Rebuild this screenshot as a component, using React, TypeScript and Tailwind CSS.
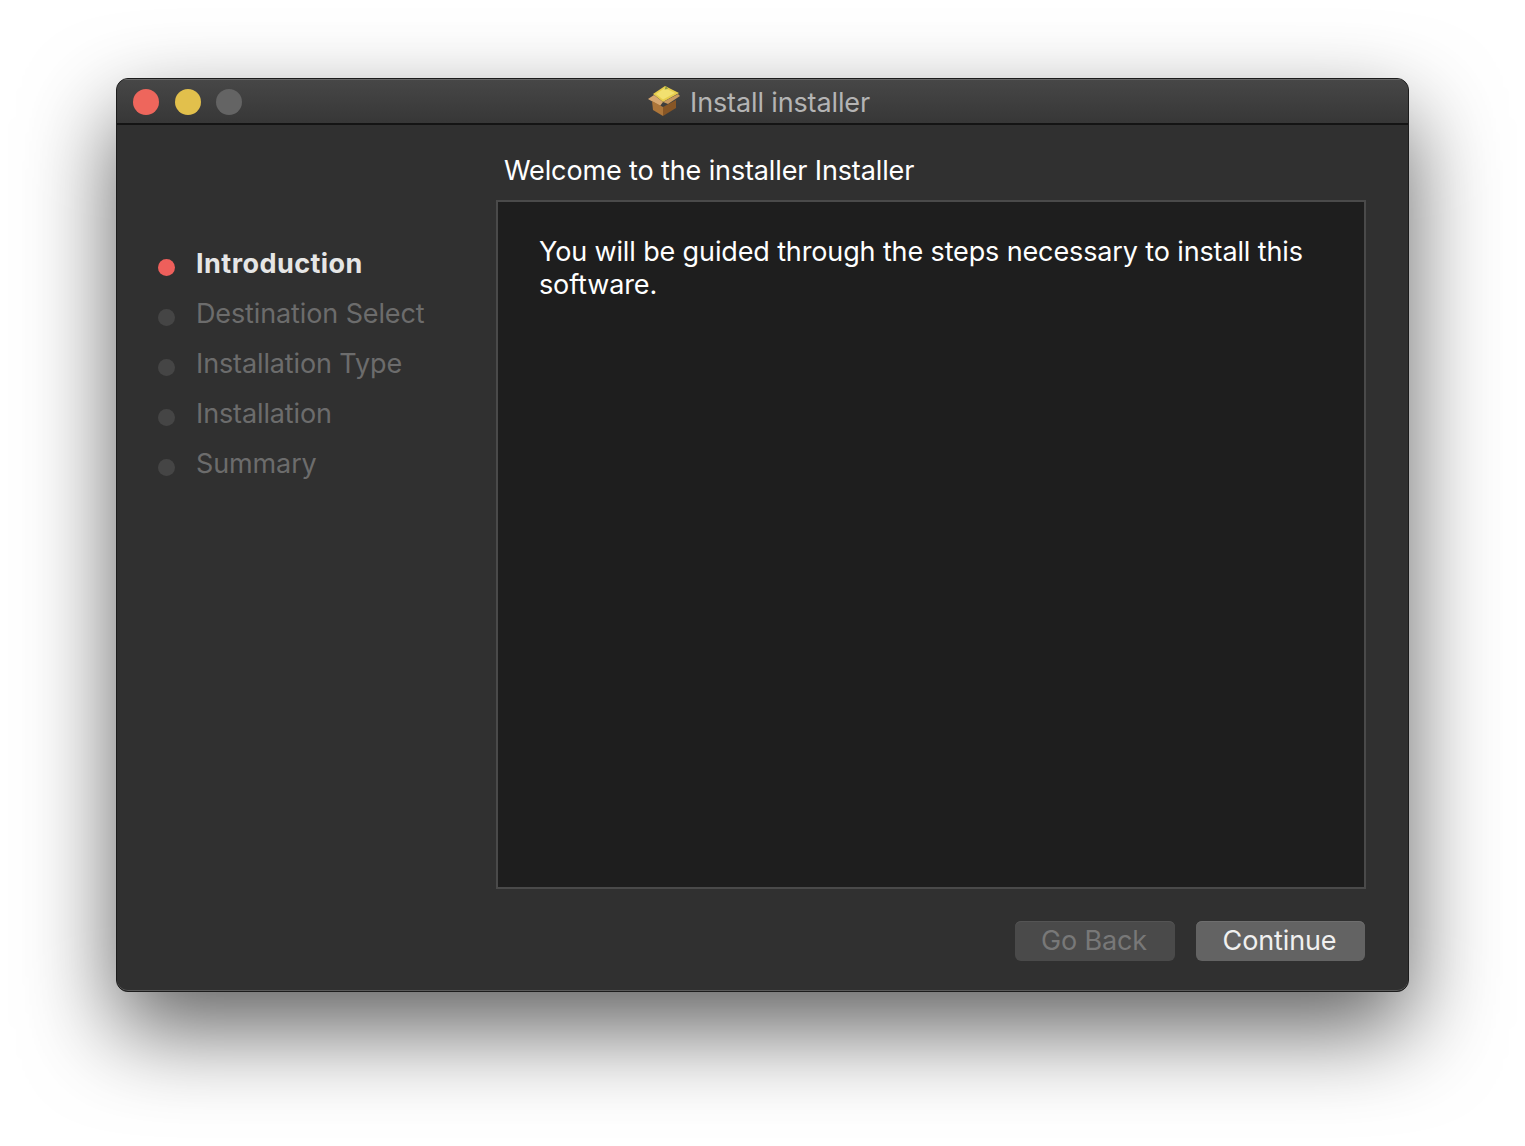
import React from 'react';

const steps = ['Introduction', 'Destination Select', 'Installation Type', 'Installation', 'Summary'];

function PackageIcon() {
  return (
    <svg width="32" height="30" viewBox="0 0 32 30" className="shrink-0">
      {/* inside of the box */}
      <path d="M5 8 L17 0 L31 7 L15 16 Z" fill="#e8cd4c" />
      <path d="M8 8 L17 2 L27 7 L15 13.5 Z" fill="#f2e070" />
      <path d="M18 0 L20 3 L16.5 3.5 Z" fill="#8c9c3c" />
      {/* flaps */}
      <path d="M6 9 L0 13 L12 20 L15 16 Z" fill="#d8a870" />
      <path d="M30 8 L32 10 L20 18 L15 16 Z" fill="#c99a60" />
      {/* box */}
      <path d="M4 15 L15 21 L15 30 L5 24 Z" fill="#ad763a" />
      <path d="M15 21 L28 14 L28 22 L15 30 Z" fill="#875626" />
    </svg>
  );
}

export default function App() {
  return (
    <div className="min-h-[1146px] w-[1525px] overflow-hidden bg-white pl-[116px] pt-[78px] font-['Inter','Liberation_Sans',sans-serif]">
      <div className="flex h-[914px] w-[1293px] flex-col overflow-hidden rounded-[12px] border border-[#1c1c1c] bg-[#303030] shadow-[0_38px_90px_rgba(0,0,0,0.62),inset_0_-1px_0_#5a5a5a]">
        {/* title bar */}
        <div className="relative flex h-[46px] shrink-0 items-center border-b-2 border-[#141414] bg-gradient-to-b from-[#474747] to-[#373737] pl-4 shadow-[inset_0_1px_0_#6a6a6a]">
          <div className="mt-px flex gap-[15.5px]">
            <span className="h-[26px] w-[26px] rounded-full bg-[#ee665c]" />
            <span className="h-[26px] w-[26px] rounded-full bg-[#e2c04c]" />
            <span className="h-[26px] w-[26px] rounded-full bg-[#646464]" />
          </div>
          <div className="absolute inset-x-0 top-0 flex h-full items-center justify-center gap-[10px] pr-[7px] text-[27px] tracking-[-0.13px] text-[#b4b4b4]">
            <PackageIcon />
            <span className="pt-[5px]">Install installer</span>
          </div>
        </div>

        <div className="flex flex-1">
          {/* steps */}
          <div className="w-[379px] shrink-0 pl-[41px] pt-[114px]">
            {steps.map((s, i) => (
              <div key={s} className="flex h-[50px] items-center gap-[21px]">
                <span className={`mt-[6px] h-[17px] w-[17px] rounded-full ${i === 0 ? 'bg-[#ee5f5b]' : 'bg-[#454545]'}`} />
                <span className={`text-[27px] ${i === 0 ? 'font-bold tracking-[0.45px] text-[#e6e6e6]' : 'tracking-[-0.12px] text-[#6c6c6c]'}`}>{s}</span>
              </div>
            ))}
          </div>

          {/* main */}
          <div className="flex flex-1 flex-col pr-[42px]">
            <div className="h-[75px] pl-2 pt-[26px] text-[27px] tracking-[-0.13px] text-white">Welcome to the installer Installer</div>
            <div className="h-[689px] border-2 border-[#4a4a4a] bg-[#1e1e1e] pl-[41px] pr-[40px] pt-[33px] text-[27px] leading-[33px] tracking-[-0.13px] text-white">
              You will be guided through the steps necessary to install this software.
            </div>
            <div className="mt-[32px] flex justify-end gap-[21px] pr-px text-[27px] tracking-[-0.13px]">
              <div className="flex h-[40px] w-[160px] items-center justify-center rounded-[6px] bg-[#4a4a4a] pr-[2px] text-[#787878] shadow-[inset_0_1px_0_#545454]">Go Back</div>
              <div className="flex h-[40px] w-[169px] items-center justify-center rounded-[6px] bg-[#636363] pr-[2px] text-[#f0f0f0] shadow-[inset_0_1px_0_#6e6e6e]">Continue</div>
            </div>
          </div>
        </div>
      </div>
    </div>
  );
}
